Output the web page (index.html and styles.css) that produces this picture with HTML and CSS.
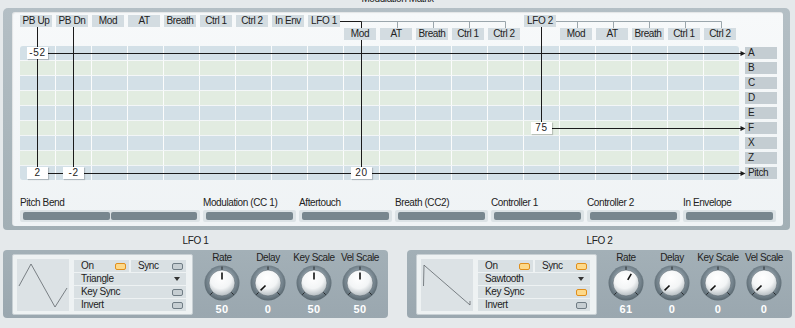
FILE: index.html
```html
<!DOCTYPE html>
<html lang="en">
<head>
    <meta charset="UTF-8">
    <meta name="viewport" content="width=device-width, initial-scale=1.0">
    <title>Modulation Matrix</title>
    <link rel="stylesheet" href="styles.css">
</head>
<body>

    <!-- shared gradients for the knobs -->
    <svg class="defs" width="0" height="0" aria-hidden="true">
        <defs>
            <radialGradient id="ring" cx="50%" cy="45%" r="55%">
                <stop offset="0.62" stop-color="#8796a0"/>
                <stop offset="1" stop-color="#57656d"/>
            </radialGradient>
            <radialGradient id="cap" cx="45%" cy="30%" r="75%">
                <stop offset="0" stop-color="#ffffff"/>
                <stop offset="0.55" stop-color="#f3f5f6"/>
                <stop offset="1" stop-color="#aab3b8"/>
            </radialGradient>
        </defs>
    </svg>

    <div class="page-title">Modulation Matrix</div>

    <div class="matrix-frame">
        <div class="matrix">

            <!-- wiring drawn over the grid, in page coordinates -->
            <svg class="wires" width="771" height="214" viewBox="0 0 771 214">
                <g transform="translate(-12,-12)">
                    <path class="bracket" d="M361.5 21.5H505.5M397.5 21.5V28M433.5 21.5V28M469.5 21.5V28M505.5 21.5V28"/>
                    <path class="bracket" d="M556 21.5H721.5M577.5 21.5V28M613.5 21.5V28M649.5 21.5V28M685.5 21.5V28M721.5 21.5V28"/>
                    <path class="wire" d="M37.5 27V173M73.5 27V173M340 21.5H361.5V28M361.5 40V173M541.5 27V128"/>
                    <path class="wire" d="M37.5 53.5H742M552 128.5H742M37.5 173.5H742"/>
                    <polygon class="arrow" points="740.5,51 745.5,53.5 740.5,56"/>
                    <polygon class="arrow" points="740.5,126 745.5,128.5 740.5,131"/>
                    <polygon class="arrow" points="740.5,171 745.5,173.5 740.5,176"/>
                </g>
            </svg>

            <div class="sources">
                <div class="src">PB Up</div>
                <div class="src">PB Dn</div>
                <div class="src">Mod</div>
                <div class="src">AT</div>
                <div class="src">Breath</div>
                <div class="src">Ctrl 1</div>
                <div class="src">Ctrl 2</div>
                <div class="src">In Env</div>
                <div class="src">LFO 1</div>
                <div class="src sub c10">Mod</div>
                <div class="src sub c11">AT</div>
                <div class="src sub c12">Breath</div>
                <div class="src sub c13">Ctrl 1</div>
                <div class="src sub c14">Ctrl 2</div>
                <div class="src c15">LFO 2</div>
                <div class="src sub c16">Mod</div>
                <div class="src sub c17">AT</div>
                <div class="src sub c18">Breath</div>
                <div class="src sub c19">Ctrl 1</div>
                <div class="src sub c20">Ctrl 2</div>
            </div>

            <div class="mgrid">
                <div class="mrow">
                    <div class="cells blue top"><span class="val c1">-52</span></div>
                    <div class="dest">A</div>
                </div>
                <div class="mrow">
                    <div class="cells green"></div>
                    <div class="dest">B</div>
                </div>
                <div class="mrow">
                    <div class="cells blue"></div>
                    <div class="dest">C</div>
                </div>
                <div class="mrow">
                    <div class="cells green"></div>
                    <div class="dest">D</div>
                </div>
                <div class="mrow">
                    <div class="cells blue"></div>
                    <div class="dest">E</div>
                </div>
                <div class="mrow">
                    <div class="cells green"><span class="val c15">75</span></div>
                    <div class="dest">F</div>
                </div>
                <div class="mrow">
                    <div class="cells blue"></div>
                    <div class="dest">X</div>
                </div>
                <div class="mrow">
                    <div class="cells green"></div>
                    <div class="dest">Z</div>
                </div>
                <div class="mrow">
                    <div class="cells blue bottom">
                        <span class="val c1">2</span>
                        <span class="val c2">-2</span>
                        <span class="val c10">20</span>
                    </div>
                    <div class="dest">Pitch</div>
                </div>
            </div>

            <div class="controllers">
                <div class="ctl wide">
                    <div class="ctl-name">Pitch Bend</div>
                    <div class="ctl-bar"><i></i><i></i></div>
                </div>
                <div class="ctl">
                    <div class="ctl-name">Modulation (CC 1)</div>
                    <div class="ctl-bar"><i></i></div>
                </div>
                <div class="ctl">
                    <div class="ctl-name">Aftertouch</div>
                    <div class="ctl-bar"><i></i></div>
                </div>
                <div class="ctl">
                    <div class="ctl-name">Breath (CC2)</div>
                    <div class="ctl-bar"><i></i></div>
                </div>
                <div class="ctl">
                    <div class="ctl-name">Controller 1</div>
                    <div class="ctl-bar"><i></i></div>
                </div>
                <div class="ctl">
                    <div class="ctl-name">Controller 2</div>
                    <div class="ctl-bar"><i></i></div>
                </div>
                <div class="ctl">
                    <div class="ctl-name">In Envelope</div>
                    <div class="ctl-bar"><i></i></div>
                </div>
            </div>

        </div>
    </div>

    <div class="lfos">

        <!-- LFO 1 -->
        <div class="lfo">
            <div class="lfo-title">LFO 1</div>
            <div class="lfo-panel">
                <div class="lfo-box">
                    <div class="wave">
                        <svg width="52" height="52" viewBox="0 0 52 52">
                            <polyline points="2,27 14,5 38,48 50,29"/>
                        </svg>
                    </div>
                    <div class="opts">
                        <div class="opt">On <span class="led on"></span></div>
                        <div class="opt">Sync <span class="led"></span></div>
                        <div class="opt full">Triangle <span class="drop"></span></div>
                        <div class="opt full">Key Sync <span class="led"></span></div>
                        <div class="opt full">Invert <span class="led"></span></div>
                    </div>
                </div>
                <div class="knobs">
                    <div class="knob">
                        <div class="knob-name">Rate</div>
                        <svg class="dial" width="36" height="36" viewBox="0 0 36 36">
                            <circle cx="18" cy="18" r="17.5" fill="url(#ring)"/>
                            <circle cx="18" cy="18" r="13" fill="url(#cap)" stroke="#56636b" stroke-width="0.6"/>
                            <path class="tick" d="M18 1.5V4.8M6.3 29.7L8.6 27.4M29.7 29.7L27.4 27.4"/>
                            <line class="pointer" x1="18" y1="14.5" x2="18" y2="7.5" transform="rotate(0 18 18)"/>
                        </svg>
                        <div class="knob-val">50</div>
                    </div>
                    <div class="knob">
                        <div class="knob-name">Delay</div>
                        <svg class="dial" width="36" height="36" viewBox="0 0 36 36">
                            <circle cx="18" cy="18" r="17.5" fill="url(#ring)"/>
                            <circle cx="18" cy="18" r="13" fill="url(#cap)" stroke="#56636b" stroke-width="0.6"/>
                            <path class="tick" d="M18 1.5V4.8M6.3 29.7L8.6 27.4M29.7 29.7L27.4 27.4"/>
                            <line class="pointer" x1="18" y1="14.5" x2="18" y2="7.5" transform="rotate(-135 18 18)"/>
                        </svg>
                        <div class="knob-val">0</div>
                    </div>
                    <div class="knob">
                        <div class="knob-name">Key Scale</div>
                        <svg class="dial" width="36" height="36" viewBox="0 0 36 36">
                            <circle cx="18" cy="18" r="17.5" fill="url(#ring)"/>
                            <circle cx="18" cy="18" r="13" fill="url(#cap)" stroke="#56636b" stroke-width="0.6"/>
                            <path class="tick" d="M18 1.5V4.8M6.3 29.7L8.6 27.4M29.7 29.7L27.4 27.4"/>
                            <line class="pointer" x1="18" y1="14.5" x2="18" y2="7.5" transform="rotate(0 18 18)"/>
                        </svg>
                        <div class="knob-val">50</div>
                    </div>
                    <div class="knob">
                        <div class="knob-name">Vel Scale</div>
                        <svg class="dial" width="36" height="36" viewBox="0 0 36 36">
                            <circle cx="18" cy="18" r="17.5" fill="url(#ring)"/>
                            <circle cx="18" cy="18" r="13" fill="url(#cap)" stroke="#56636b" stroke-width="0.6"/>
                            <path class="tick" d="M18 1.5V4.8M6.3 29.7L8.6 27.4M29.7 29.7L27.4 27.4"/>
                            <line class="pointer" x1="18" y1="14.5" x2="18" y2="7.5" transform="rotate(0 18 18)"/>
                        </svg>
                        <div class="knob-val">50</div>
                    </div>
                </div>
            </div>
        </div>

        <!-- LFO 2 -->
        <div class="lfo">
            <div class="lfo-title">LFO 2</div>
            <div class="lfo-panel">
                <div class="lfo-box">
                    <div class="wave">
                        <svg width="52" height="52" viewBox="0 0 52 52">
                            <polyline points="2.5,27 3,6 4,7 49,46 49,42"/>
                        </svg>
                    </div>
                    <div class="opts">
                        <div class="opt">On <span class="led on"></span></div>
                        <div class="opt">Sync <span class="led on"></span></div>
                        <div class="opt full">Sawtooth <span class="drop"></span></div>
                        <div class="opt full">Key Sync <span class="led on"></span></div>
                        <div class="opt full">Invert <span class="led"></span></div>
                    </div>
                </div>
                <div class="knobs">
                    <div class="knob">
                        <div class="knob-name">Rate</div>
                        <svg class="dial" width="36" height="36" viewBox="0 0 36 36">
                            <circle cx="18" cy="18" r="17.5" fill="url(#ring)"/>
                            <circle cx="18" cy="18" r="13" fill="url(#cap)" stroke="#56636b" stroke-width="0.6"/>
                            <path class="tick" d="M18 1.5V4.8M6.3 29.7L8.6 27.4M29.7 29.7L27.4 27.4"/>
                            <line class="pointer" x1="18" y1="14.5" x2="18" y2="7.5" transform="rotate(30 18 18)"/>
                        </svg>
                        <div class="knob-val">61</div>
                    </div>
                    <div class="knob">
                        <div class="knob-name">Delay</div>
                        <svg class="dial" width="36" height="36" viewBox="0 0 36 36">
                            <circle cx="18" cy="18" r="17.5" fill="url(#ring)"/>
                            <circle cx="18" cy="18" r="13" fill="url(#cap)" stroke="#56636b" stroke-width="0.6"/>
                            <path class="tick" d="M18 1.5V4.8M6.3 29.7L8.6 27.4M29.7 29.7L27.4 27.4"/>
                            <line class="pointer" x1="18" y1="14.5" x2="18" y2="7.5" transform="rotate(-135 18 18)"/>
                        </svg>
                        <div class="knob-val">0</div>
                    </div>
                    <div class="knob">
                        <div class="knob-name">Key Scale</div>
                        <svg class="dial" width="36" height="36" viewBox="0 0 36 36">
                            <circle cx="18" cy="18" r="17.5" fill="url(#ring)"/>
                            <circle cx="18" cy="18" r="13" fill="url(#cap)" stroke="#56636b" stroke-width="0.6"/>
                            <path class="tick" d="M18 1.5V4.8M6.3 29.7L8.6 27.4M29.7 29.7L27.4 27.4"/>
                            <line class="pointer" x1="18" y1="14.5" x2="18" y2="7.5" transform="rotate(-135 18 18)"/>
                        </svg>
                        <div class="knob-val">0</div>
                    </div>
                    <div class="knob">
                        <div class="knob-name">Vel Scale</div>
                        <svg class="dial" width="36" height="36" viewBox="0 0 36 36">
                            <circle cx="18" cy="18" r="17.5" fill="url(#ring)"/>
                            <circle cx="18" cy="18" r="13" fill="url(#cap)" stroke="#56636b" stroke-width="0.6"/>
                            <path class="tick" d="M18 1.5V4.8M6.3 29.7L8.6 27.4M29.7 29.7L27.4 27.4"/>
                            <line class="pointer" x1="18" y1="14.5" x2="18" y2="7.5" transform="rotate(-135 18 18)"/>
                        </svg>
                        <div class="knob-val">0</div>
                    </div>
                </div>
            </div>
        </div>

    </div>

</body>
</html>
```

FILE: styles.css
```css
/* General */
body {
    margin: 0;
    background-color: #e5e9eb;
    font-family: "Liberation Sans", Arial, sans-serif;
    font-size: 10px;
    letter-spacing: -0.4px;
    color: #222;
    overflow: hidden;
}

.defs {
    position: absolute;
    width: 0;
    height: 0;
}

.page-title {
    margin-top: -6px;
    height: 14px;
    line-height: 10px;
    text-align: center;
}

/* Matrix panel */
.matrix-frame {
    margin: 0 5px 0 3px;
    padding: 4px 7px 4px 9px;
    background: linear-gradient(#b4bfc5, #a2afb5);
    border-radius: 5px 5px 4px 4px;
}

.matrix {
    position: relative;
    padding: 3px 0 4px 8px;
    background: linear-gradient(#f7f9fa, #eff3f5);
    border-radius: 3px;
    box-shadow: inset 1px 1px 1px rgba(0, 0, 0, 0.08);
}

.wires {
    position: absolute;
    left: 0;
    top: 0;
    z-index: 1;
    pointer-events: none;
}

.wire {
    fill: none;
    stroke: #1b1b1b;
    stroke-width: 1;
}

.bracket {
    fill: none;
    stroke: #9ba6ac;
    stroke-width: 1;
}

.arrow {
    fill: #1b1b1b;
}

/* Source headers */
.sources {
    display: grid;
    grid-template-columns: repeat(20, 32px);
    grid-template-rows: 12px 12px;
    column-gap: 4px;
    row-gap: 1px;
}

.src {
    grid-row: 1;
    background: #d3dce1;
    line-height: 12px;
    text-align: center;
    white-space: nowrap;
}

.src.sub {
    grid-row: 2;
}

.c1 { grid-column: 1; }
.c2 { grid-column: 2; }
.c10 { grid-column: 10; }
.c11 { grid-column: 11; }
.c12 { grid-column: 12; }
.c13 { grid-column: 13; }
.c14 { grid-column: 14; }
.c15 { grid-column: 15; }
.c16 { grid-column: 16; }
.c17 { grid-column: 17; }
.c18 { grid-column: 18; }
.c19 { grid-column: 19; }
.c20 { grid-column: 20; }

/* Grid */
.mgrid {
    margin-top: 6px;
    display: flex;
    flex-direction: column;
    gap: 1px;
}

.mrow {
    display: flex;
    gap: 6px;
    height: 14px;
}

.cells {
    width: 719px;
    display: grid;
    grid-template-columns: repeat(20, 35px);
    grid-template-rows: 14px;
    column-gap: 1px;
}

.cells.blue {
    background: repeating-linear-gradient(90deg, transparent 0 35px, #fbfcfc 35px 36px), #d3e0e7;
}

.cells.green {
    background: repeating-linear-gradient(90deg, transparent 0 35px, #fbfcfc 35px 36px), #e2ece1;
}

.cells.top {
    border-radius: 3px 3px 0 0;
}

.cells.bottom {
    border-radius: 0 0 3px 3px;
}

.val {
    position: relative;
    z-index: 2;
    grid-row: 1;
    justify-self: center;
    align-self: center;
    width: 21px;
    height: 12px;
    line-height: 12px;
    background: #fff;
    text-align: center;
    letter-spacing: 0.6px;
    box-shadow: 1px 1px 1px rgba(0, 0, 0, 0.18);
}

.dest {
    align-self: center;
    width: 32px;
    height: 12px;
    box-sizing: border-box;
    padding-left: 3px;
    line-height: 12px;
    background: #c4cdd2;
}

/* Controller bars */
.controllers {
    margin-top: 17px;
    display: flex;
    gap: 3px;
}

.ctl {
    width: 93px;
}

.ctl.wide {
    width: 180px;
}

.ctl-name {
    height: 11px;
    line-height: 11px;
    margin-bottom: 2px;
    white-space: nowrap;
}

.ctl-bar {
    height: 12px;
    box-sizing: border-box;
    padding: 2px 3px;
    display: flex;
    gap: 1px;
    background: #dce3e6;
    border-radius: 2px;
}

.ctl-bar i {
    flex: 1;
    display: block;
    background: #78878f;
    border-radius: 2px;
}

/* LFO panels */
.lfos {
    margin: 6px 0 0 3px;
    display: flex;
    gap: 19px;
}

.lfo {
    width: 385px;
}

.lfo-title {
    height: 10px;
    line-height: 10px;
    margin-bottom: 4px;
    text-align: center;
}

.lfo-panel {
    height: 68px;
    box-sizing: border-box;
    padding: 4px 0 3px 9px;
    display: flex;
    background: linear-gradient(#a3b0b7, #9aa7af);
    border-radius: 4px;
}

.lfo-box {
    width: 181px;
    box-sizing: border-box;
    padding: 4px 6px 3px 4px;
    display: flex;
    gap: 5px;
    background: #eef2f3;
    border: 1px solid #c8d0d4;
    border-radius: 2px;
}

.wave {
    width: 52px;
    height: 52px;
    background: #dce2e5;
}

.wave svg {
    display: block;
}

.wave polyline {
    fill: none;
    stroke: #5f666b;
    stroke-width: 0.8;
}

.opts {
    width: 112px;
    margin-top: 1px;
    display: grid;
    grid-template-columns: 55px 55px;
    grid-auto-rows: 12px;
    column-gap: 2px;
    row-gap: 1px;
    align-content: start;
}

.opt {
    padding: 0 3px 0 7px;
    display: flex;
    align-items: center;
    justify-content: space-between;
    line-height: 12px;
    background: #d9e0e3;
}

.opt.full {
    grid-column: 1 / 3;
}

.led {
    width: 9px;
    height: 5px;
    border: 1px solid #6f7c84;
    border-radius: 2px;
    background: #c6ced2;
}

.led.on {
    border-color: #e08f1c;
    background: #fdd98a;
}

.drop {
    margin-right: 3px;
    width: 0;
    height: 0;
    border-left: 3.5px solid transparent;
    border-right: 3.5px solid transparent;
    border-top: 4px solid #333;
}

/* Knobs */
.knobs {
    margin: -2px 0 0 6px;
    display: flex;
}

.knob {
    width: 46px;
    display: flex;
    flex-direction: column;
    align-items: center;
}

.knob-name {
    height: 11px;
    line-height: 11px;
    white-space: nowrap;
}

.dial {
    display: block;
    margin-top: 2px;
}

.tick {
    fill: none;
    stroke: #26292b;
    stroke-width: 1;
}

.pointer {
    stroke: #111;
    stroke-width: 1.6;
}

.knob-val {
    margin-top: 3px;
    height: 11px;
    line-height: 11px;
    font-size: 11px;
    font-weight: bold;
    letter-spacing: 0.3px;
    color: #fff;
}
```
